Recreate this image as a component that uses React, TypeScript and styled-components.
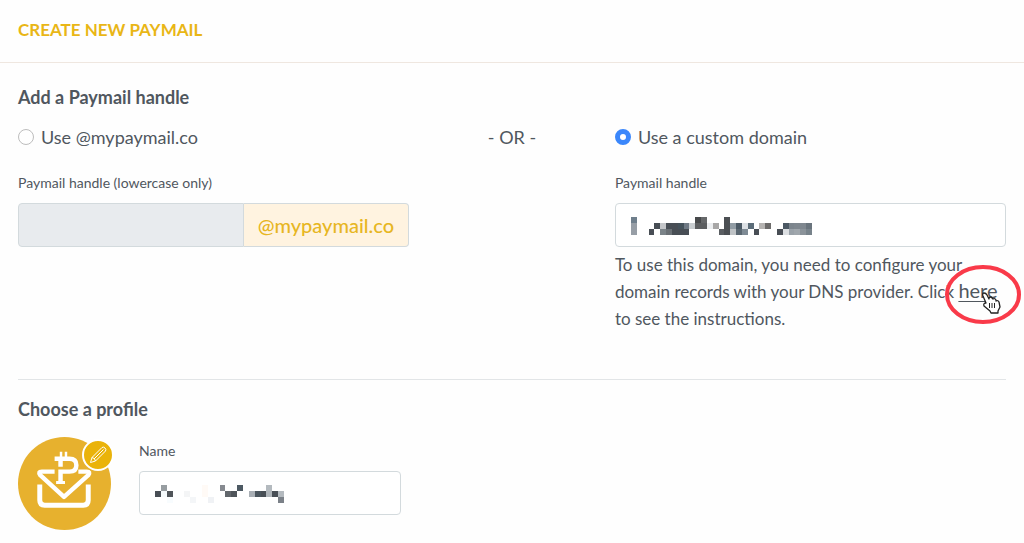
import React, { useState } from "react";
import styled, { createGlobalStyle } from "styled-components";

const GlobalStyle = createGlobalStyle`
  *, *::before, *::after { box-sizing: border-box; }
  body {
    margin: 0;
    background: #fefefe;
    color: #50575e;
    font-family: Lato, "Liberation Sans", sans-serif;
    font-size: 18px;
    line-height: 28px;
  }
  input, button { font: inherit; color: inherit; }
`;

const Header = styled.header`
  padding: 16px 18px 18px;
  border-bottom: 1px solid #efe7e0;
`;

const PageTitle = styled.h1`
  margin: 0;
  font-size: 17px;
  line-height: 28px;
  font-weight: 700;
  color: #e9b616;
  text-transform: uppercase;
`;

const Main = styled.main`
  padding: 0 18px;
`;

const Section = styled.section<{ $divided?: boolean }>`
  padding: ${(p) => (p.$divided ? "15px 0 12px" : "20px 0 47px")};
  border-top: ${(p) => (p.$divided ? "1px solid #e2e5e7" : "0")};
`;

const SectionTitle = styled.h2`
  margin: 0;
  font-size: 18px;
  line-height: 28px;
  font-weight: 700;
`;

const Choices = styled.div`
  display: grid;
  grid-template-columns: minmax(0, 19fr) minmax(0, 10fr) minmax(0, 19fr);
  margin-top: 12px;
`;

const Or = styled.div`
  text-align: center;
`;

const RadioLabel = styled.label`
  display: flex;
  align-items: center;
  gap: 7px;
  height: 28px;
`;

const Radio = styled.input`
  appearance: none;
  flex: none;
  width: 16px;
  height: 16px;
  margin: 0;
  border: 1px solid #bdbdbd;
  border-radius: 50%;
  background: #fff;
  &:checked {
    border: 5px solid #3b87fb;
  }
`;

const FieldLabel = styled.label`
  display: block;
  font-size: 14px;
  line-height: 20px;
`;

const Field = styled.div`
  margin-top: 22px;
`;

const Control = styled.div`
  position: relative;
  display: flex;
  height: 44px;
  margin-top: 10px;
`;

const TextInput = styled.input<{ $joined?: boolean }>`
  flex: 1;
  min-width: 0;
  padding: 0 14px;
  border: 1px solid #d3dadd;
  border-radius: ${(p) => (p.$joined ? "4px 0 0 4px" : "4px")};
  background: #fff;
  &:disabled {
    background: #e8ebee;
  }
`;

const Suffix = styled.span`
  display: flex;
  align-items: center;
  padding: 0 14px;
  border: 1px solid #d3dadd;
  border-left: 0;
  border-radius: 0 4px 4px 0;
  background: #fff3e0;
  color: #e7b622;
  font-size: 20px;
  font-weight: 500;
`;

const Redaction = styled.svg`
  position: absolute;
  top: 14px;
  left: 16px;
  pointer-events: none;
`;

const Help = styled.p`
  margin: 4px 0 0;
  font-size: 17px;
  line-height: 27px;
`;

const HelpLink = styled.a`
  position: relative;
  color: inherit;
  font-size: 20px;
  line-height: 20px;
  text-decoration: underline;
  text-decoration-thickness: 1px;
  text-underline-offset: 3px;
`;

const Ring = styled.svg`
  position: absolute;
  top: 50%;
  left: 50%;
  margin: -25px 0 0 -33px;
  overflow: visible;
  pointer-events: none;
`;

const Profile = styled.div`
  display: flex;
  gap: 28px;
  margin-top: 14px;
`;

const Avatar = styled.div`
  position: relative;
  flex: none;
  width: 93px;
  height: 93px;
`;

const EditButton = styled.button`
  position: absolute;
  top: 2px;
  right: -3px;
  display: flex;
  align-items: center;
  justify-content: center;
  width: 32px;
  height: 32px;
  padding: 0;
  border: 2px solid #fff;
  border-radius: 50%;
  background: #eab30a;
`;

const NameField = styled.div`
  width: 262px;
  padding-top: 4px;
`;

type Cell = [number, number, string];

const D = "#484e55";
const handleCells: Cell[] = [
  [0, 0, "#6f7f8c"], [0, 1, "#979ea6"], [0, 2, "#979ea6"],
  [3, 2, D], [4, 1, D], [5, 1, "#c4c6c9"], [5, 2, "#7b8388"],
  [6, 1, D], [6, 2, "#6a7075"], [7, 1, D], [7, 2, D], [8, 1, "#45525b"], [8, 2, D],
  [9, 2, D], [9, 1, "#6f7984"], [10, 1, "#c9cdd0"],
  [11, 0, "#47494b"], [11, 1, "#5c5e60"], [12, 0, "#66686a"], [12, 1, "#5c5e60"],
  [13, 1, "#eceef0"], [14, 1, "#a8a7a7"], [15, 2, "#5a5e62"],
  [16, 0, "#4b4f53"], [16, 1, "#4b4f53"], [16, 2, "#4b4f53"],
  [17, 1, "#919ca4"], [17, 2, "#bfc3c6"], [18, 1, "#4c5a65"], [18, 2, "#5b6872"],
  [19, 1, "#dce0e4"], [19, 2, "#7f8b95"], [20, 1, "#5c6d79"], [21, 2, D],
  [22, 1, "#b5b3b1"], [23, 1, "#6c6b6a"], [25, 2, D], [26, 1, "#4c5964"], [26, 2, "#dcdfe2"],
  [27, 1, "#7c858d"], [27, 2, "#9aa2a9"], [28, 1, "#7f878f"], [28, 2, "#a0a7ad"],
  [29, 1, "#7f878f"], [29, 2, "#8b939a"], [30, 1, "#6a747d"], [30, 2, "#78838b"],
];

const nameCells: Cell[] = [
  [0, 1, D], [1, 0, "#979da1"], [1, 1, "#f5fafc"], [2, 1, "#50555a"], [2, 2, "#f8fcfe"],
  [5, 1, "#f4f5f6"], [6, 2, "#f4f6f8"], [9, 2, "#f0f2f5"], [8, 0, "#fffaf6"], [8, 1, "#fffaf6"],
  [11, 0, "#868a90"], [12, 1, "#62676c"], [13, 1, "#4f555a"], [14, 0, "#4d5963"],
  [16, 1, "#a8aeb4"], [17, 1, "#4a555d"], [18, 1, D], [19, 0, "#b4babf"], [19, 1, "#aeb4b9"],
  [20, 1, D], [21, 1, "#b4babf"], [21, 2, "#7b8188"],
];

function Mosaic({ cells, columns, width }: { cells: Cell[]; columns: number; width: number }) {
  return (
    <Redaction
      width={width}
      height="18"
      viewBox={`0 0 ${columns} 3`}
      preserveAspectRatio="none"
      shapeRendering="crispEdges"
      aria-hidden="true"
    >
      {cells.map(([x, y, fill]) => (
        <rect key={`${x}-${y}`} x={x} y={y} width="1" height="1" fill={fill} />
      ))}
    </Redaction>
  );
}

function Logo() {
  return (
    <svg width="93" height="93" viewBox="0 0 94 94" aria-hidden="true">
      <circle cx="47" cy="47" r="47" fill="#e7b12e" />
      <g fill="none" stroke="#fff" strokeWidth="4.5">
        <path d="M37 35H24q-4 0-1.500 3.500L46.500 60.500 71 38.500q2.500-3.500-1.500-3.500H61" strokeLinejoin="round" />
        <path d="M22 48V64q0 5 5 5H66q5 0 5-5V48" strokeWidth="5" />
        <path d="M37 22H52q7 0 7 6.500T52 35H43V46M43 22V30" />
        <path d="M38.500 46H47.500" strokeWidth="3" />
        <path d="M43.500 15v6M48.500 15v6" strokeWidth="2.500" />
      </g>
    </svg>
  );
}

export default function App() {
  const [mode, setMode] = useState("custom");
  return (
    <>
      <GlobalStyle />
      <Header>
        <PageTitle>Create new Paymail</PageTitle>
      </Header>
      <Main>
        <Section>
          <SectionTitle>Add a Paymail handle</SectionTitle>
          <Choices>
            <div>
              <RadioLabel>
                <Radio type="radio" name="mode" checked={mode === "shared"} onChange={() => setMode("shared")} />
                Use @mypaymail.co
              </RadioLabel>
              <Field>
                <FieldLabel htmlFor="shared-handle">Paymail handle (lowercase only)</FieldLabel>
                <Control>
                  <TextInput id="shared-handle" $joined disabled={mode !== "shared"} />
                  <Suffix>@mypaymail.co</Suffix>
                </Control>
              </Field>
            </div>
            <Or>- OR -</Or>
            <div>
              <RadioLabel>
                <Radio type="radio" name="mode" checked={mode === "custom"} onChange={() => setMode("custom")} />
                Use a custom domain
              </RadioLabel>
              <Field>
                <FieldLabel htmlFor="custom-handle">Paymail handle</FieldLabel>
                <Control>
                  <TextInput id="custom-handle" />
                  <Mosaic cells={handleCells} columns={31} width={181} />
                </Control>
              </Field>
              <Help>
                To use this domain, you need to configure your domain records with your DNS provider. Click{" "}
                <HelpLink href="#instructions">
                  here
                  <Ring width="76" height="59" viewBox="0 0 76 59" aria-hidden="true">
                    <ellipse cx="38" cy="29.5" rx="36" ry="27.5" fill="none" stroke="#f93a49" strokeWidth="4" />
                    <path
                      d="M41 38l-3-7q-1-3 1-3 2 0 3 2l2 4v-1q2-2 3 0l1 1q2-1 3 1l0 1q2-1 3 1l1 5-2 4v2h-7l-1-2-6-5q-1-3 2-3z"
                      fill="#fff"
                      stroke="#222"
                      strokeWidth="1.3"
                      strokeLinejoin="round"
                    />
                    <path d="M44.500 38v5M47 38v5M49.500 38v5" stroke="#222" strokeWidth="1" />
                  </Ring>
                </HelpLink>{" "}
                to see the instructions.
              </Help>
            </div>
          </Choices>
        </Section>
        <Section $divided>
          <SectionTitle>Choose a profile</SectionTitle>
          <Profile>
            <Avatar>
              <Logo />
              <EditButton aria-label="Edit picture">
                <svg width="20" height="20" viewBox="0 0 20 20" fill="none" stroke="#fff" strokeWidth="1" aria-hidden="true">
                  <path d="M2.500 17.500l1.500-5L14 2.500q1.500-1 3 .5t.5 3L7.500 16zM4 12.500q3 .5 3.500 3.500M6 14L15.500 4.500" />
                </svg>
              </EditButton>
            </Avatar>
            <NameField>
              <FieldLabel htmlFor="profile-name">Name</FieldLabel>
              <Control>
                <TextInput id="profile-name" />
                <Mosaic cells={nameCells} columns={22} width={129} />
              </Control>
            </NameField>
          </Profile>
        </Section>
      </Main>
    </>
  );
}
